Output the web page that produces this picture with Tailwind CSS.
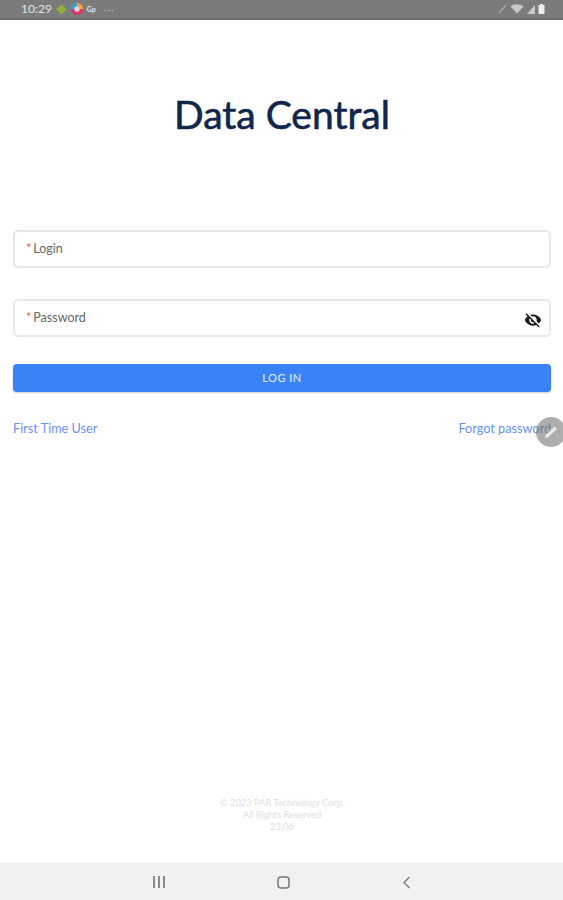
<!DOCTYPE html>
<html lang="en">
<head>
    <meta charset="UTF-8">
    <meta name="viewport" content="width=device-width, initial-scale=1.0">
    <title>Data Central</title>
    <script src="https://cdn.jsdelivr.net/npm/@tailwindcss/browser@4"></script>
</head>
<body class="bg-white font-['Lato',sans-serif]">
    <div class="relative flex flex-col w-[563px] h-[900px] overflow-hidden">

        <!-- status bar -->
        <div class="flex items-center h-[20px] shrink-0 pl-[21px] pr-[18px] bg-[#7b7b7b] border-b-2 border-[#6a6a6a] text-[#e4e4e4]">
            <span class="text-[12px] leading-none">10:29</span>
            <svg class="ml-[4px] shrink-0" width="11" height="11" viewBox="0 0 11 11"><path d="M5.5 0.5 L10.5 5.5 L5.5 10.5 L0.5 5.5 Z" fill="#8fb339"/></svg>
            <svg class="ml-[3px] shrink-0" width="14" height="14" viewBox="0 0 36 36">
                <path d="M18 2 A16 16 0 0 1 34 18 L18 18 Z" fill="#f2a12e"/>
                <path d="M34 18 A16 16 0 0 1 18 34 L18 18 Z" fill="#e8326f"/>
                <path d="M18 34 A16 16 0 0 1 2 18 L18 18 Z" fill="#c93a7c"/>
                <path d="M2 18 A16 16 0 0 1 18 2 L18 18 Z" fill="#3aa0d8"/>
                <circle cx="18" cy="18" r="7" fill="#d8d8d8"/>
            </svg>
            <span class="ml-[3px] text-[7px] font-bold leading-none">Gp</span>
            <span class="ml-[8px] text-[10px] leading-none tracking-[1px] text-[#bdbdbd]">···</span>
            <div class="ml-auto flex items-center gap-[3px]">
                <svg width="9" height="10" viewBox="0 0 9 10"><path d="M1 9 L8 1" stroke="#a9a9a9" stroke-width="1.4"/></svg>
                <svg width="14" height="10" viewBox="0 0 14 10"><path d="M0.5 2.5 C4 -0.5 10 -0.5 13.5 2.5 L7 9.5 Z" fill="#c9c9c9"/></svg>
                <svg width="8" height="10" viewBox="0 0 8 10"><path d="M8 1 L8 10 L0 10 Z" fill="#c9c9c9"/></svg>
                <svg width="7" height="10" viewBox="0 0 7 10"><path d="M2 1 H5 V0 H2 Z M0.5 1 H6.5 V10 H0.5 Z" fill="#ececec"/></svg>
            </div>
        </div>

        <!-- login form -->
        <main class="flex flex-col flex-1 pl-[13px] pr-[12px]">
            <h1 class="mt-[71px] text-center text-[39px] leading-[46px] font-normal text-[#10264d] [-webkit-text-stroke:0.6px_#10264d]">Data Central</h1>

            <div class="mt-[93px] flex items-center h-[38px] px-[11px] rounded-[5px] border-2 border-[#e8e8e8] text-[12.5px] text-[#666666]">
                <span class="text-[#e2604f] mr-[2px]">*</span>Login
            </div>

            <div class="mt-[31px] flex items-center justify-between h-[38px] pl-[11px] pr-[7px] rounded-[5px] border-2 border-[#e8e8e8] text-[12.5px] text-[#666666]">
                <span><span class="text-[#e2604f] mr-[2px]">*</span>Password</span>
                <svg class="mt-[3px]" width="18" height="18" viewBox="0 0 24 24" fill="#1a1a1a"><path d="M12 7c2.76 0 5 2.24 5 5 0 .65-.13 1.26-.36 1.83l2.92 2.92c1.51-1.26 2.7-2.89 3.43-4.75-1.73-4.39-6-7.5-11-7.5-1.4 0-2.74.25-3.98.7l2.16 2.16C10.74 7.13 11.35 7 12 7zM2 4.27l2.28 2.28.46.46C3.08 8.3 1.78 10.02 1 12c1.73 4.39 6 7.5 11 7.5 1.55 0 3.03-.3 4.38-.84l.42.42L19.73 22 21 20.73 3.27 3 2 4.27zM7.53 9.8l1.55 1.55c-.05.21-.08.43-.08.65 0 1.66 1.34 3 3 3 .22 0 .44-.03.65-.08l1.55 1.55c-.67.33-1.41.53-2.2.53-2.76 0-5-2.24-5-5 0-.79.2-1.53.53-2.2z"/></svg>
            </div>

            <button class="mt-[27px] h-[28px] rounded-[4px] bg-[#3a82f8] text-[11px] font-medium tracking-[0.5px] text-[#dfeaff] shadow-[0_1px_2px_rgba(0,0,0,0.2)]">LOG IN</button>

            <div class="mt-[26px] flex justify-between text-[12.7px] leading-[20px] text-[#6593f0]">
                <a>First Time User</a>
                <a>Forgot password</a>
            </div>

            <footer class="mt-auto mb-[30px] text-center text-[9.3px] leading-[12px] text-[#e0e0e0]">
                <p>© 2023 PAR Technology Corp.</p>
                <p>All Rights Reserved</p>
                <p>23.06</p>
            </footer>
        </main>

        <!-- navigation bar -->
        <nav class="flex items-center justify-between h-[37px] shrink-0 pt-[1px] pl-[153px] pr-[152px] bg-[#f1f1f1]">
            <svg width="12" height="12" viewBox="0 0 12 12" fill="#8a8a8a"><rect x="0" y="0" width="2" height="12"/><rect x="5" y="0" width="2" height="12"/><rect x="10" y="0" width="2" height="12"/></svg>
            <svg width="13" height="13" viewBox="0 0 13 13" fill="none"><rect x="1" y="1" width="11" height="11" rx="3" stroke="#777" stroke-width="1.5"/></svg>
            <svg width="9" height="13" viewBox="0 0 9 13" fill="none"><path d="M7.5 1 L2 6.5 L7.5 12" stroke="#808080" stroke-width="1.5"/></svg>
        </nav>

        <!-- floating edit button -->
        <div class="absolute left-[536px] top-[417px] flex items-center justify-center w-[30px] h-[30px] rounded-full bg-[#777777]/60">
            <svg width="16" height="16" viewBox="0 0 16 16"><path d="M2 14 L3 10.5 L11.5 2.5 L14 5 L5.5 13 Z" fill="#e9e9e9"/></svg>
        </div>
    </div>
</body>
</html>
